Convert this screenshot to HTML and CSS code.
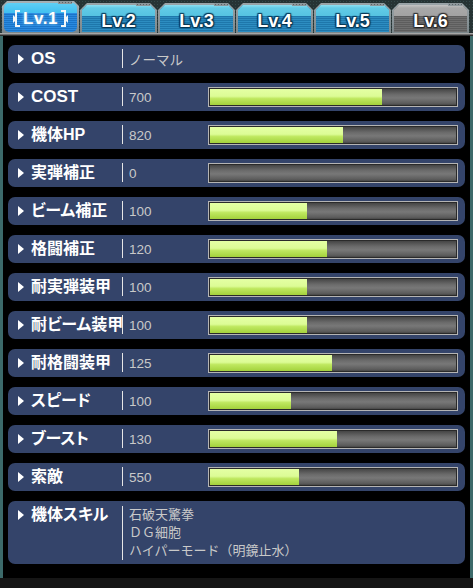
FILE: index.html
```html
<!DOCTYPE html>
<html lang="ja">
<head>
<meta charset="utf-8">
<title>Lv.1</title>
<link rel="stylesheet" href="styles.css">
</head>
<body>
<div class="screen">
  <div class="tabs">
    <div class="tab tab-active"><div class="face"><span class="brk brk-l"></span><span class="tlabel">Lv.1</span><span class="brk brk-r"></span></div></div>
    <div class="tab"><div class="face"><span class="tlabel">Lv.2</span></div></div>
    <div class="tab"><div class="face"><span class="tlabel">Lv.3</span></div></div>
    <div class="tab"><div class="face"><span class="tlabel">Lv.4</span></div></div>
    <div class="tab"><div class="face"><span class="tlabel">Lv.5</span></div></div>
    <div class="tab tab-off"><div class="face"><span class="tlabel">Lv.6</span></div></div>
  </div>
  <div class="rule"></div>
  <div class="panel">
    <div class="row"><span class="tri"></span><span class="label label-en">OS</span><span class="sep"></span><span class="val">ノーマル</span></div>
    <div class="row"><span class="tri"></span><span class="label label-en">COST</span><span class="sep"></span><span class="val">700</span><div class="bar"><div class="fill" style="width:70%"></div></div></div>
    <div class="row"><span class="tri"></span><span class="label">機体HP</span><span class="sep"></span><span class="val">820</span><div class="bar"><div class="fill" style="width:54%"></div></div></div>
    <div class="row"><span class="tri"></span><span class="label">実弾補正</span><span class="sep"></span><span class="val">0</span><div class="bar"><div class="fill" style="width:0%"></div></div></div>
    <div class="row"><span class="tri"></span><span class="label">ビーム補正</span><span class="sep"></span><span class="val">100</span><div class="bar"><div class="fill" style="width:39.5%"></div></div></div>
    <div class="row"><span class="tri"></span><span class="label">格闘補正</span><span class="sep"></span><span class="val">120</span><div class="bar"><div class="fill" style="width:47.6%"></div></div></div>
    <div class="row"><span class="tri"></span><span class="label">耐実弾装甲</span><span class="sep"></span><span class="val">100</span><div class="bar"><div class="fill" style="width:39.5%"></div></div></div>
    <div class="row"><span class="tri"></span><span class="label">耐ビーム装甲</span><span class="sep"></span><span class="val">100</span><div class="bar"><div class="fill" style="width:39.5%"></div></div></div>
    <div class="row"><span class="tri"></span><span class="label">耐格闘装甲</span><span class="sep"></span><span class="val">125</span><div class="bar"><div class="fill" style="width:49.6%"></div></div></div>
    <div class="row"><span class="tri"></span><span class="label">スピード</span><span class="sep"></span><span class="val">100</span><div class="bar"><div class="fill" style="width:33%"></div></div></div>
    <div class="row"><span class="tri"></span><span class="label">ブースト</span><span class="sep"></span><span class="val">130</span><div class="bar"><div class="fill" style="width:51.6%"></div></div></div>
    <div class="row"><span class="tri"></span><span class="label">索敵</span><span class="sep"></span><span class="val">550</span><div class="bar"><div class="fill" style="width:36%"></div></div></div>
    <div class="row row-skill"><span class="tri"></span><span class="label">機体スキル</span><span class="sep"></span>
      <div class="skills"><div>石破天驚拳</div><div>ＤＧ細胞</div><div>ハイパーモード（明鏡止水）</div></div>
    </div>
  </div>
  <div class="foot"></div>
</div>
</body>
</html>
```

FILE: styles.css
```css
* { box-sizing: border-box; }
html, body { margin: 0; padding: 0; background: #000; }
body { font-family: "Liberation Sans", "Noto Sans CJK JP", sans-serif; }

.screen {
  width: 473px;
  height: 588px;
  overflow: hidden;
  display: flex;
  flex-direction: column;
  background-color: #1d3636;
  background-image: radial-gradient(circle, #3c6a6a 0.8px, transparent 1px);
  background-size: 2px 2px;
}

/* ---------- tabs ---------- */
.tabs {
  height: 33px;
  display: flex;
  gap: 1px;
  padding-left: 2px;
  align-items: flex-end;
  background-color: #263334;
  background-image: radial-gradient(circle, #34494a 0.8px, transparent 1px);
  background-size: 3px 3px;
}
.tab {
  position: relative;
  flex: 0 0 77px;
  height: 30px;
  padding: 2px 2px 1px;
  background: linear-gradient(#9aa4a8, #7c878b);
  clip-path: polygon(7px 0, calc(100% - 7px) 0, 100% 7px, 100% 100%, 0 100%, 0 7px);
}
.tab::after {
  content: "";
  position: absolute;
  top: 0;
  right: 7px;
  width: 14px;
  height: 3px;
  background: radial-gradient(circle, #5a6266 0.7px, transparent 0.9px) 0 0 / 3px 3px, #8d979b;
}
.face {
  height: 100%;
  display: flex;
  align-items: center;
  justify-content: center;
  padding-top: 6px;
  clip-path: polygon(5px 0, calc(100% - 5px) 0, 100% 5px, 100% 100%, 0 100%, 0 5px);
  background:
    linear-gradient(to bottom, #8ee0f1 0, #62cbe6 3px, #55c3e1 11px, transparent 11px),
    repeating-linear-gradient(to bottom, #2d8dc1 0 1px, #1e77ab 1px 2px);
}
.tlabel {
  font-family: "Liberation Sans", sans-serif;
  font-weight: bold;
  font-size: 18px;
  color: #fff;
  text-shadow: 0 0 2px #05324f, 1px 1px 1px #05324f, -1px -1px 1px #0a3d5c, 1px -1px 1px #0a3d5c, -1px 1px 1px #0a3d5c;
}
.tab-active {
  height: 32px;
  clip-path: polygon(5px 0, calc(100% - 5px) 0, 100% 5px, 100% 100%, 0 100%, 0 5px);
  background: linear-gradient(#a7b1b5, #7a858a);
}
.tab-active .face {
  padding-top: 2px;
  border-radius: 5px;
  clip-path: none;
  background:
    linear-gradient(to bottom, #5fd0f5 0, #40bff0 10px, transparent 10px),
    repeating-linear-gradient(to bottom, #2a8ae0 0 1px, #1a74c8 1px 2px);
}
.tab-active .tlabel {
  font-size: 17px;
  text-shadow: 0 0 3px #8fd8ff, 0 0 1px #0b4a8a;
  letter-spacing: 0.5px;
}
.brk {
  position: relative;
  width: 5px;
  height: 17px;
  border: 2px solid #f2f6f8;
}
.brk-l { border-right: none; margin-right: 3px; }
.brk-r { border-left: none; margin-left: 3px; }
.brk-l::before, .brk-r::before {
  content: "";
  position: absolute;
  top: 3px;
  width: 0;
  height: 0;
  border-top: 4px solid transparent;
  border-bottom: 4px solid transparent;
}
.brk-l::before { left: -4px; border-left: 4px solid #f2f6f8; }
.brk-r::before { right: -4px; border-right: 4px solid #f2f6f8; }

.tab-off .face {
  background:
    linear-gradient(to bottom, #c4c4c4 0, #a9a9a9 3px, #a2a2a2 11px, transparent 11px),
    repeating-linear-gradient(to bottom, #6f6f6f 0 1px, #5d5d5d 1px 2px);
}
.tab-off .tlabel {
  text-shadow: 0 0 2px #222, 1px 1px 1px #222, -1px -1px 1px #333, 1px -1px 1px #333, -1px 1px 1px #333;
}

.rule {
  height: 3px;
  background: linear-gradient(to bottom, #a6a6a6 0 1px, #6c6c6c 1px 2px, #2e2e2e 2px 3px);
}

/* ---------- panel ---------- */
.panel {
  flex: 1;
  margin: 0 3px;
  background: #000;
  padding: 9px 5px 14px;
  display: flex;
  flex-direction: column;
  gap: 10px;
}
.row {
  height: 28px;
  display: flex;
  align-items: center;
  padding: 0 7px 0 10px;
  background: #34446a;
  border-radius: 7px;
}
.tri {
  flex: 0 0 auto;
  width: 0;
  height: 0;
  border-left: 6px solid #fff;
  border-top: 5px solid transparent;
  border-bottom: 5px solid transparent;
  margin-right: 7px;
}
.label {
  flex: 0 0 91px;
  min-width: 0;
  font-weight: bold;
  font-size: 16px;
  line-height: 18px;
  color: #fff;
  white-space: nowrap;
  font-feature-settings: "palt";
}
.label-en { font-size: 17px; }
.sep {
  flex: 0 0 1px;
  align-self: stretch;
  margin: 4px 0 5px;
  background: #e6e6e6;
}
.val {
  flex: 0 0 85px;
  padding-left: 6px;
  font-size: 13.5px;
  color: #c9c9c9;
  white-space: nowrap;
}
.bar {
  flex: 1;
  height: 20px;
  border: 1px solid #b4b4b4;
  background: linear-gradient(to bottom, #3e3e3e 0, #6a6a6a 35%, #787878 55%, #5c5c5c 85%, #3a3a3a 100%);
  box-shadow: inset 0 0 0 1px #2a2a2a;
  padding: 1px;
}
.fill {
  height: 100%;
  background: linear-gradient(to bottom, #e4ffa4 0, #dcfc96 45%, #bfe860 60%, #a3d23c 100%);
}
.row-skill {
  height: 63px;
  align-items: flex-start;
  padding-top: 5px;
  padding-bottom: 4px;
}
.row-skill .tri { margin-top: 4px; }
.row-skill .sep { margin: 0; }
.skills {
  padding-left: 6px;
  font-size: 13px;
  line-height: 18px;
  color: #c9c9c9;
  white-space: nowrap;
}

.foot {
  height: 10px;
  background: #161616;
}
```
